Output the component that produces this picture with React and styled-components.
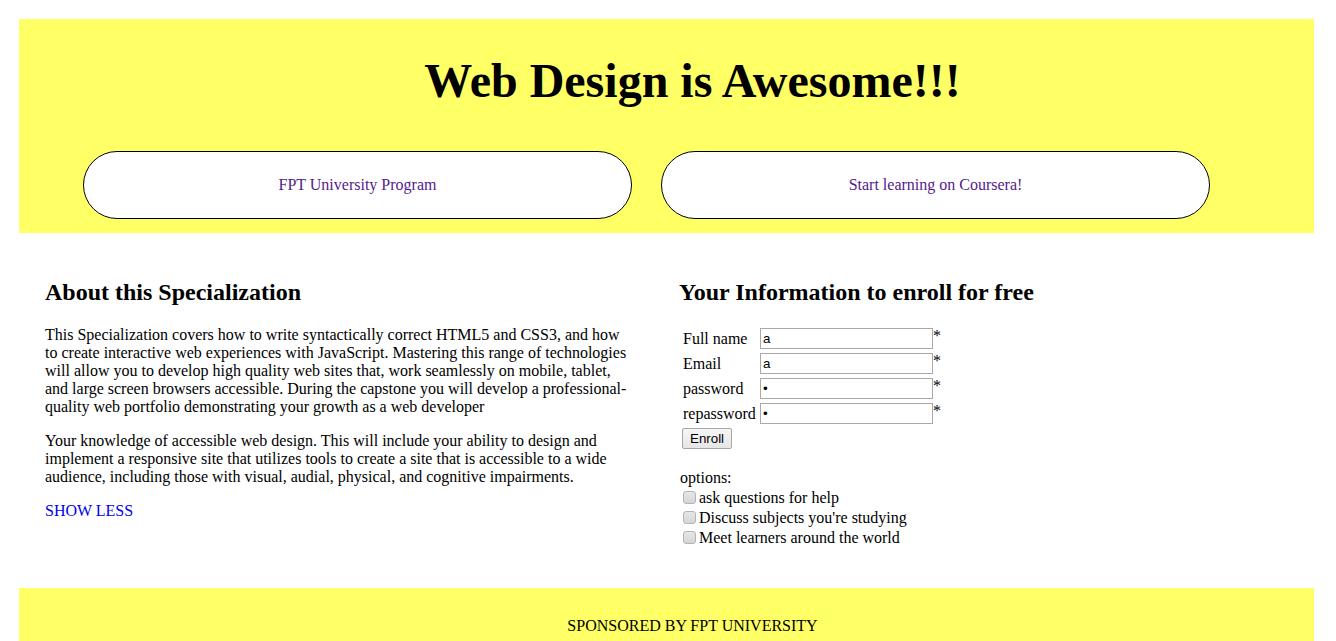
import React from "react";
import styled, { createGlobalStyle } from "styled-components";

const Global = createGlobalStyle`
  html, body { margin: 0; padding: 0; background: #fff; }
  body { font-family: "Liberation Serif", "Times New Roman", serif; font-size: 16px; color: #000; }
`;

const Page = styled.div`
  padding: 19px 22px 0 19px;
`;

const Banner = styled.header`
  background: #ffff66;
  padding: 34px 0 14px 0;
`;

const Title = styled.h1`
  margin: 0 0 43px 0;
  padding-left: 52px;
  text-align: center;
  font-size: 48px;
  line-height: 55px;
  font-weight: bold;
`;

const NavRow = styled.nav`
  display: flex;
  gap: 29px;
  padding-left: 64px;
`;

const NavLink = styled.a`
  box-sizing: border-box;
  width: 549px;
  height: 68px;
  display: flex;
  align-items: center;
  justify-content: center;
  background: #fff;
  border: 1px solid #000;
  border-radius: 34px;
  color: #551a8b;
  font-size: 16px;
  text-decoration: none;
`;

const Main = styled.main`
  display: grid;
  grid-template-columns: 585px 1fr;
  column-gap: 49px;
  padding: 26px 26px 24px 26px;
`;

const Column = styled.section``;

const Heading = styled.h2`
  font-size: 24px;
  font-weight: bold;
  margin: 20px 0;
`;

const Para = styled.p`
  margin: 16px 0;
  line-height: 18px;
`;

const MoreLink = styled.a`
  color: #0000ee;
  text-decoration: none;
`;

const EnrollForm = styled.form`
  margin: 0 0 16px 0;
`;

const Table = styled.table`
  border-collapse: separate;
  border-spacing: 2px;
  margin-top: -1px;
  font-size: 16px;
  td { padding: 1px; }
`;

const LabelCell = styled.td`
  white-space: nowrap;
  vertical-align: middle;
  width: 71px;
  && { padding-left: 2px; }
`;

const Field = styled.input`
  box-sizing: border-box;
  width: 173px;
  height: 21px;
  border: 1px solid #a9a9a9;
  padding: 1px 2px;
  margin: 0;
  font-family: "Liberation Sans", Arial, sans-serif;
  font-size: 13.33px;
  vertical-align: middle;
`;

const Star = styled.span`
  vertical-align: top;
  font-size: 16px;
  line-height: 16px;
`;

const EnrollButton = styled.button`
  box-sizing: border-box;
  height: 21px;
  padding: 1px 7px;
  margin: 0;
  font-family: "Liberation Sans", Arial, sans-serif;
  font-size: 13.33px;
  background: linear-gradient(#f6f6f6, #e6e6e6);
  border: 1px solid #a6a6a6;
  border-radius: 2px;
  color: #000;
`;

const OptionsTitle = styled.div`
  margin-top: 16px;
  padding-left: 1px;
  line-height: 20px;
`;

const OptionLine = styled.label`
  display: flex;
  align-items: center;
  height: 20px;
  padding-left: 4px;
  gap: 3px;
`;

const Check = styled.input`
  appearance: none;
  box-sizing: border-box;
  width: 13px;
  height: 13px;
  margin: 0 0 2px 0;
  border: 1px solid #b4b4b4;
  border-radius: 3px;
  background: linear-gradient(#e6e6e6, #d6d6d6);
`;

const Footer = styled.footer`
  background: #ffff66;
  padding: 29px 0 8px 52px;
  text-align: center;
  line-height: 18px;
`;

export default function App() {
  return (
    <Page>
      <Global />
      <Banner>
        <Title>Web Design is Awesome!!!</Title>
        <NavRow>
          <NavLink href="#">FPT University Program</NavLink>
          <NavLink href="#">Start learning on Coursera!</NavLink>
        </NavRow>
      </Banner>
      <Main>
        <Column>
          <Heading>About this Specialization</Heading>
          <Para>
            This Specialization covers how to write syntactically correct HTML5 and CSS3, and how
            to create interactive web experiences with JavaScript. Mastering this range of technologies
            will allow you to develop high quality web sites that, work seamlessly on mobile, tablet,
            and large screen browsers accessible. During the capstone you will develop a professional-quality
            web portfolio demonstrating your growth as a web developer
          </Para>
          <Para>
            Your knowledge of accessible web design. This will include your ability to design and
            implement a responsive site that utilizes tools to create a site that is accessible to a wide
            audience, including those with visual, audial, physical, and cognitive impairments.
          </Para>
          <MoreLink href="#">SHOW LESS</MoreLink>
        </Column>
        <Column>
          <Heading>Your Information to enroll for free</Heading>
          <EnrollForm onSubmit={(e) => e.preventDefault()}>
            <Table>
              <tbody>
                <tr>
                  <LabelCell>Full name</LabelCell>
                  <td><Field type="text" defaultValue="a" /><Star>*</Star></td>
                </tr>
                <tr>
                  <LabelCell>Email</LabelCell>
                  <td><Field type="text" defaultValue="a" /><Star>*</Star></td>
                </tr>
                <tr>
                  <LabelCell>password</LabelCell>
                  <td><Field type="password" defaultValue="a" /><Star>*</Star></td>
                </tr>
                <tr>
                  <LabelCell>repassword</LabelCell>
                  <td><Field type="password" defaultValue="a" /><Star>*</Star></td>
                </tr>
                <tr>
                  <td colSpan={2}><EnrollButton type="submit">Enroll</EnrollButton></td>
                </tr>
              </tbody>
            </Table>
            <OptionsTitle>options:</OptionsTitle>
            <OptionLine><Check type="checkbox" />ask questions for help</OptionLine>
            <OptionLine><Check type="checkbox" />Discuss subjects you're studying</OptionLine>
            <OptionLine><Check type="checkbox" />Meet learners around the world</OptionLine>
          </EnrollForm>
        </Column>
      </Main>
      <Footer>SPONSORED BY FPT UNIVERSITY</Footer>
    </Page>
  );
}
